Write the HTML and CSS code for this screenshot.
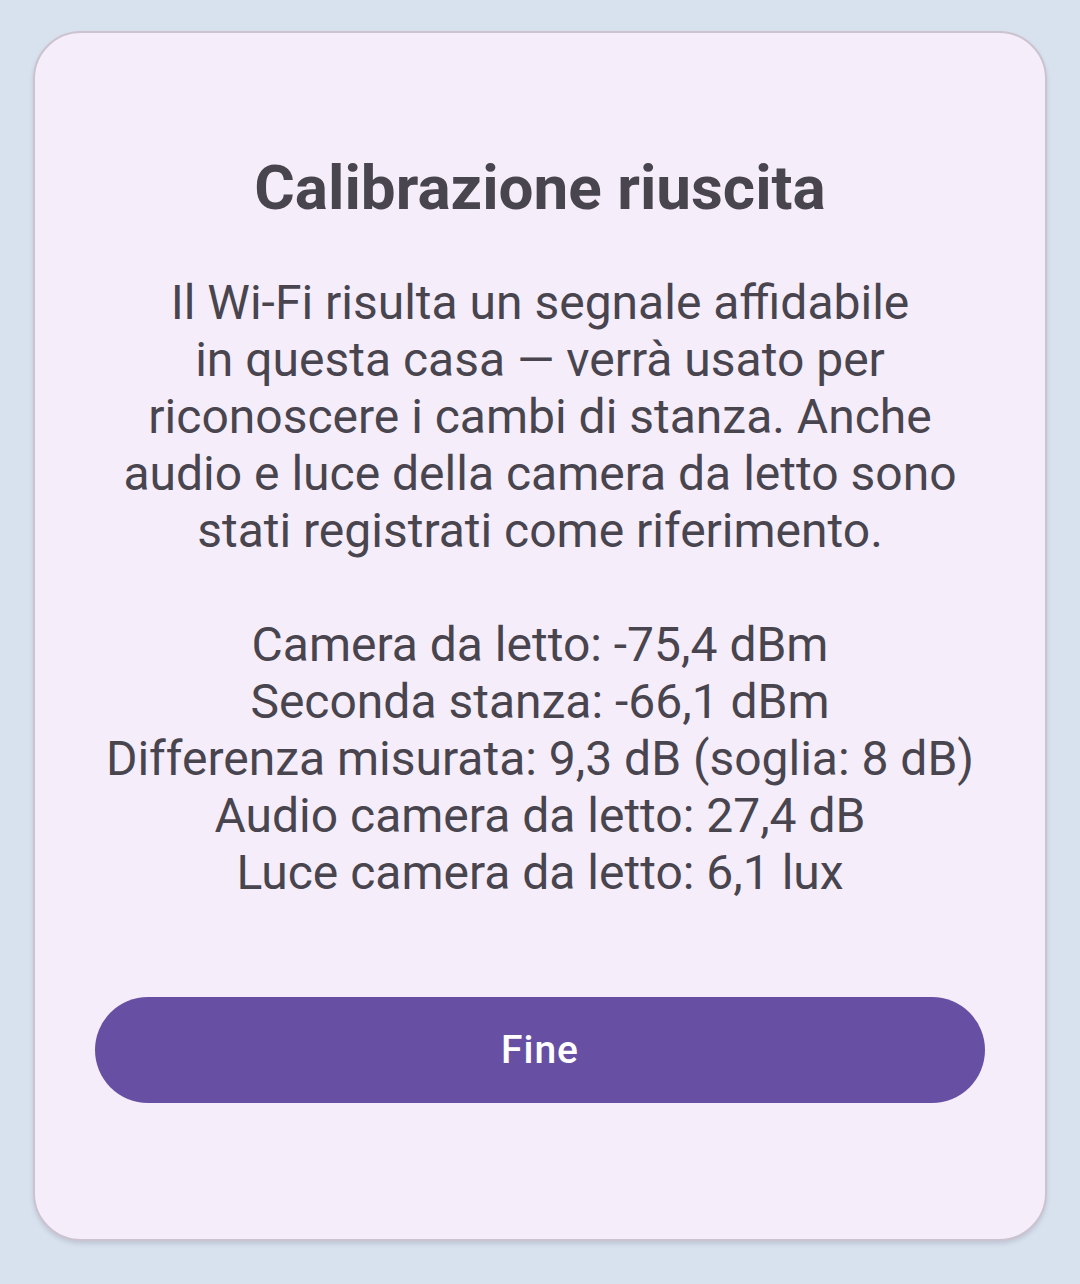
FILE: index.html
```html
<!DOCTYPE html>
<html lang="it">
<head>
    <meta charset="UTF-8">
    <meta name="viewport" content="width=device-width, initial-scale=1.0">
    <title>Calibrazione riuscita</title>
    <link rel="stylesheet" href="styles.css">
</head>
<body>
    <div class="dialog">
        <h1 class="dialog-title">Calibrazione riuscita</h1>
        <p class="dialog-text">Il Wi-Fi risulta un segnale affidabile<br>in questa casa — verrà usato per riconoscere i cambi di stanza. Anche audio e luce della camera da letto sono stati registrati come riferimento.</p>
        <p class="dialog-text readings">
            <span>Camera da letto: -75,4 dBm</span>
            <span>Seconda stanza: -66,1 dBm</span>
            <span>Differenza misurata: 9,3 dB (soglia: 8 dB)</span>
            <span>Audio camera da letto: 27,4 dB</span>
            <span>Luce camera da letto: 6,1 lux</span>
        </p>
        <button class="done-btn">Fine</button>
    </div>
</body>
</html>
```

FILE: styles.css
```css
body {
    margin: 0;
    padding: 31px 33px;
    background: #d8e2ee;
    font-family: Roboto, "Noto Sans", sans-serif;
}

.dialog {
    display: flex;
    flex-direction: column;
    align-items: center;
    padding: 117px 60px 0;
    box-sizing: border-box;
    height: 1210px;
    background: #f5edf9;
    border: 2px solid #cbc3cf;
    border-radius: 48px;
    box-shadow: 0 3px 4px rgba(90, 80, 110, 0.18);
    color: #49454f;
    text-align: center;
}

.dialog-title {
    margin: 0;
    font-size: 62px;
    line-height: 75px;
    font-weight: 700;
}

.dialog-text {
    margin: 49px 0 0;
    font-size: 48px;
    line-height: 57px;
}

.readings {
    margin-top: 57px;
    display: flex;
    flex-direction: column;
    align-items: center;
}

.done-btn {
    margin-top: 96px;
    width: 100%;
    height: 106px;
    border: none;
    border-radius: 53px;
    background: #6750a4;
    color: #ffffff;
    font-family: Roboto, "Noto Sans", sans-serif;
    font-size: 39px;
    font-weight: 500;
    letter-spacing: 1px;
}
```
